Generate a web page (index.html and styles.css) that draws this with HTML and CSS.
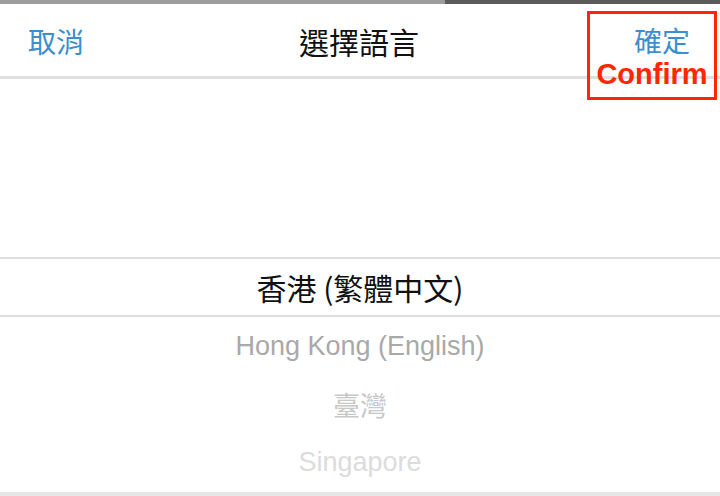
FILE: index.html
```html
<!DOCTYPE html>
<html lang="zh-Hant">
<head>
  <meta charset="UTF-8" />
  <meta name="viewport" content="width=device-width, initial-scale=1" />
  <title>選擇語言</title>
  <link rel="stylesheet" href="styles.css">
</head>
<body>
  <div class="status-strip">
    <span class="strip-light"></span>
    <span class="strip-dark"></span>
  </div>

  <header class="nav-bar">
    <button type="button" class="nav-btn cancel-btn">取消</button>
    <h1 class="nav-title">選擇語言</h1>
    <button type="button" class="nav-btn confirm-btn">確定</button>

    <!-- annotation overlay -->
    <div class="callout">
      <span class="callout-label">Confirm</span>
    </div>
  </header>

  <main class="picker">
    <div class="picker-spacer"></div>
    <div class="picker-row selected">香港 (繁體中文)</div>
    <div class="picker-row fade-1">Hong Kong (English)</div>
    <div class="picker-row fade-2">臺灣</div>
    <div class="picker-row fade-3">Singapore</div>
  </main>
</body>
</html>
```

FILE: styles.css
```css
* {
  margin: 0;
  padding: 0;
  box-sizing: border-box;
}
body {
  font-family: "Liberation Sans", "Noto Sans CJK TC", sans-serif;
  background: #fff;
  color: #111;
  width: 720px;
  height: 496px;
  overflow: hidden;
}
.status-strip {
  display: flex;
  height: 4px;
}
.strip-light {
  width: 445px;
  background: #9c9c9c;
}
.strip-dark {
  flex: 1;
  background: #5b5b5b;
}
.nav-bar {
  position: relative;
  display: grid;
  grid-template-columns: 1fr auto 1fr;
  align-items: center;
  height: 75px;
  padding: 0 30px 0 28px;
  border-bottom: 3px solid #e0e0e0;
}
.nav-btn {
  background: none;
  border: none;
  font-family: "Noto Sans CJK TC", sans-serif;
  font-size: 28px;
  color: #3b8fcf;
  line-height: 1;
  padding-top: 2px;
}
.cancel-btn {
  justify-self: start;
}
.confirm-btn {
  justify-self: end;
  margin-top: -2px;
}
.nav-title {
  font-family: "Noto Sans CJK TC", sans-serif;
  font-size: 30px;
  font-weight: 400;
  color: #111;
  line-height: 1;
  padding-top: 2px;
}
.callout {
  position: absolute;
  left: 587px;
  top: 7px;
  width: 130px;
  height: 89px;
  border: 3.5px solid #ff2600;
  display: flex;
  align-items: flex-end;
  justify-content: center;
  padding-bottom: 8px;
}
.callout-label {
  font-family: "Liberation Sans", sans-serif;
  font-weight: 700;
  font-size: 29px;
  line-height: 1;
  color: #ff2600;
}
.picker {
  display: flex;
  flex-direction: column;
}
.picker-spacer {
  height: 178px;
}
.picker-row {
  display: flex;
  align-items: center;
  justify-content: center;
  height: 58px;
  font-size: 27px;
  font-family: "Liberation Sans", "Noto Sans CJK TC", sans-serif;
}
.picker-row.selected {
  height: 60px;
  border-top: 2px solid #dedede;
  border-bottom: 2px solid #dedede;
  font-family: "Noto Sans CJK TC", sans-serif;
  font-size: 30px;
  color: #111;
}
.fade-1 {
  color: #a9a9a9;
}
.fade-2 {
  color: #c8c8c8;
}
.fade-3 {
  color: #dcdcdc;
  border-bottom: 4px solid #e6e6e6;
  height: 63px;
}
```
